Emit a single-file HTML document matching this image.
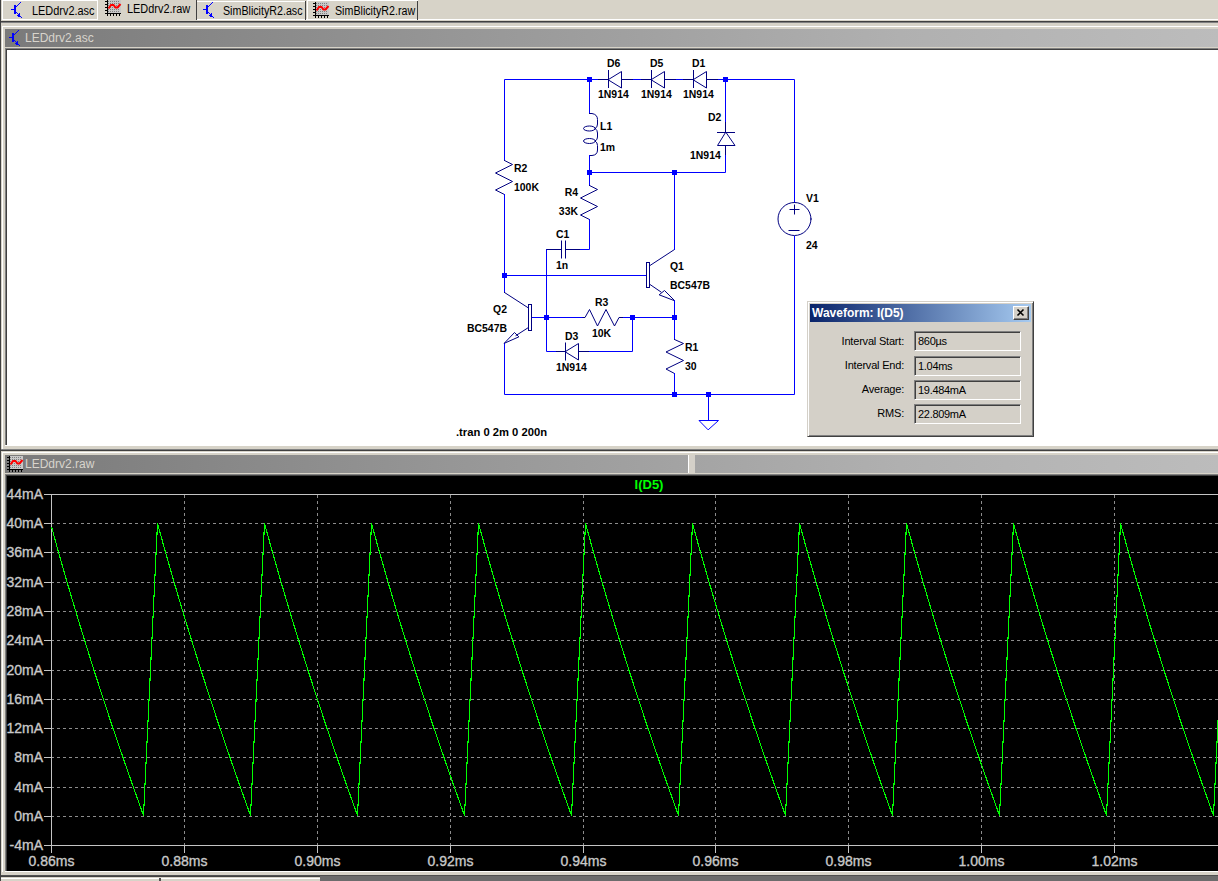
<!DOCTYPE html>
<html><head><meta charset="utf-8"><style>
html,body{margin:0;padding:0;}
body{width:1218px;height:881px;overflow:hidden;position:relative;background:#d7d3c8;font-family:"Liberation Sans", sans-serif;}
.a{position:absolute;}
.tab{position:absolute;font-size:12px;color:#000;white-space:nowrap;transform:scaleX(0.91);transform-origin:0 0;}
.lbl{position:absolute;font-size:11px;color:#000;text-align:right;width:100px;letter-spacing:-0.2px;}
.fld{position:absolute;left:914px;width:102px;height:18px;letter-spacing:-0.3px;border-top:1px solid #808080;border-left:1px solid #808080;border-right:1px solid #fff;border-bottom:1px solid #fff;box-shadow:inset 1px 1px 0 #404040;font-size:11px;line-height:18px;padding-left:3px;box-sizing:content-box;}
</style></head><body>
<!-- left edge -->
<div class="a" style="left:0;top:0;width:1px;height:881px;background:#404040"></div>
<!-- tab bar -->
<div class="a" style="left:2px;top:0;width:94px;height:18px;border:1px solid #fff;"></div>
<div class="a" style="left:196px;top:0;width:1px;height:20px;background:#404040"></div>
<div class="a" style="left:197px;top:1px;width:109px;height:1px;background:#fff"></div>
<div class="a" style="left:197px;top:19px;width:1021px;height:1px;background:#fff"></div>
<div class="a" style="left:305px;top:1px;width:1px;height:19px;background:#404040"></div>
<div class="a" style="left:307px;top:0px;width:110px;height:19px;border-left:1px solid #fff;border-top:1px solid #fff;"></div>
<div class="a" style="left:417px;top:1px;width:1px;height:19px;background:#404040"></div>
<svg width="13" height="19" style="position:absolute;left:10px;top:0px" shape-rendering="crispEdges"><rect x="4" y="5" width="2" height="9" fill="#0000ff"/><rect x="1" y="9" width="3" height="1" fill="#0000ff"/><rect x="1" y="10" width="1" height="0" fill="#0000ff"/><rect x="6" y="6" width="1" height="1" fill="#0000ff"/><rect x="7" y="5" width="1" height="1" fill="#0000ff"/><rect x="8" y="4" width="1" height="1" fill="#0000ff"/><rect x="9" y="3" width="1" height="1" fill="#0000ff"/><rect x="10" y="2" width="1" height="1" fill="#0000ff"/><rect x="6" y="12" width="1" height="1" fill="#0000ff"/><rect x="7" y="13" width="1" height="1" fill="#0000ff"/><rect x="8" y="14" width="1" height="1" fill="#0000ff"/><rect x="9" y="15" width="1" height="1" fill="#0000ff"/><rect x="10" y="16" width="1" height="1" fill="#0000ff"/><rect x="11" y="17" width="1" height="1" fill="#0000ff"/><rect x="8" y="15" width="2" height="2" fill="#0000ff"/><rect x="9" y="13" width="1" height="3" fill="#0000ff"/><rect x="7" y="15" width="1" height="1" fill="#0000ff"/><rect x="10" y="16" width="1" height="1" fill="#0000ff"/></svg>
<div class="tab" style="left:32px;top:4px;">LEDdrv2.asc</div>
<svg width="22" height="17" style="position:absolute;left:100px;top:0px" shape-rendering="crispEdges"><rect x="8" y="0" width="13" height="13" fill="#c8c8c8"/><rect x="8" y="1" width="1" height="1" fill="#808080"/><rect x="8" y="3" width="1" height="1" fill="#808080"/><rect x="8" y="5" width="1" height="1" fill="#808080"/><rect x="8" y="7" width="1" height="1" fill="#808080"/><rect x="8" y="9" width="1" height="1" fill="#808080"/><rect x="8" y="11" width="1" height="1" fill="#808080"/><rect x="10" y="1" width="1" height="1" fill="#808080"/><rect x="10" y="3" width="1" height="1" fill="#808080"/><rect x="10" y="5" width="1" height="1" fill="#808080"/><rect x="10" y="7" width="1" height="1" fill="#808080"/><rect x="10" y="9" width="1" height="1" fill="#808080"/><rect x="10" y="11" width="1" height="1" fill="#808080"/><rect x="12" y="1" width="1" height="1" fill="#808080"/><rect x="12" y="3" width="1" height="1" fill="#808080"/><rect x="12" y="5" width="1" height="1" fill="#808080"/><rect x="12" y="7" width="1" height="1" fill="#808080"/><rect x="12" y="9" width="1" height="1" fill="#808080"/><rect x="12" y="11" width="1" height="1" fill="#808080"/><rect x="14" y="1" width="1" height="1" fill="#808080"/><rect x="14" y="3" width="1" height="1" fill="#808080"/><rect x="14" y="5" width="1" height="1" fill="#808080"/><rect x="14" y="7" width="1" height="1" fill="#808080"/><rect x="14" y="9" width="1" height="1" fill="#808080"/><rect x="14" y="11" width="1" height="1" fill="#808080"/><rect x="16" y="1" width="1" height="1" fill="#808080"/><rect x="16" y="3" width="1" height="1" fill="#808080"/><rect x="16" y="5" width="1" height="1" fill="#808080"/><rect x="16" y="7" width="1" height="1" fill="#808080"/><rect x="16" y="9" width="1" height="1" fill="#808080"/><rect x="16" y="11" width="1" height="1" fill="#808080"/><rect x="18" y="1" width="1" height="1" fill="#808080"/><rect x="18" y="3" width="1" height="1" fill="#808080"/><rect x="18" y="5" width="1" height="1" fill="#808080"/><rect x="18" y="7" width="1" height="1" fill="#808080"/><rect x="18" y="9" width="1" height="1" fill="#808080"/><rect x="18" y="11" width="1" height="1" fill="#808080"/><rect x="7" y="0" width="1" height="14" fill="#000"/><rect x="5" y="13" width="16" height="1" fill="#000"/><rect x="5" y="1" width="2" height="1" fill="#000"/><rect x="5" y="4" width="2" height="1" fill="#000"/><rect x="5" y="7" width="2" height="1" fill="#000"/><rect x="5" y="10" width="2" height="1" fill="#000"/><rect x="5" y="13" width="2" height="1" fill="#000"/><rect x="7" y="14" width="1" height="2" fill="#000"/><rect x="10" y="14" width="1" height="2" fill="#000"/><rect x="13" y="14" width="1" height="2" fill="#000"/><rect x="16" y="14" width="1" height="2" fill="#000"/><rect x="19" y="14" width="1" height="2" fill="#000"/><polyline points="8.5,8.5 11,5 13.5,5 15.5,7.5 17.5,7.5 20.5,4" stroke="#ff0000" stroke-width="2" fill="none" shape-rendering="auto"/></svg>
<div class="tab" style="left:127px;top:2px;">LEDdrv2.raw</div>
<svg width="13" height="19" style="position:absolute;left:202px;top:0px" shape-rendering="crispEdges"><rect x="4" y="5" width="2" height="9" fill="#0000ff"/><rect x="1" y="9" width="3" height="1" fill="#0000ff"/><rect x="1" y="10" width="1" height="0" fill="#0000ff"/><rect x="6" y="6" width="1" height="1" fill="#0000ff"/><rect x="7" y="5" width="1" height="1" fill="#0000ff"/><rect x="8" y="4" width="1" height="1" fill="#0000ff"/><rect x="9" y="3" width="1" height="1" fill="#0000ff"/><rect x="10" y="2" width="1" height="1" fill="#0000ff"/><rect x="6" y="12" width="1" height="1" fill="#0000ff"/><rect x="7" y="13" width="1" height="1" fill="#0000ff"/><rect x="8" y="14" width="1" height="1" fill="#0000ff"/><rect x="9" y="15" width="1" height="1" fill="#0000ff"/><rect x="10" y="16" width="1" height="1" fill="#0000ff"/><rect x="11" y="17" width="1" height="1" fill="#0000ff"/><rect x="8" y="15" width="2" height="2" fill="#0000ff"/><rect x="9" y="13" width="1" height="3" fill="#0000ff"/><rect x="7" y="15" width="1" height="1" fill="#0000ff"/><rect x="10" y="16" width="1" height="1" fill="#0000ff"/></svg>
<div class="tab" style="left:223px;top:4px;transform:scaleX(0.89);">SimBlicityR2.asc</div>
<svg width="22" height="17" style="position:absolute;left:308px;top:2px" shape-rendering="crispEdges"><rect x="8" y="0" width="13" height="13" fill="#c8c8c8"/><rect x="8" y="1" width="1" height="1" fill="#808080"/><rect x="8" y="3" width="1" height="1" fill="#808080"/><rect x="8" y="5" width="1" height="1" fill="#808080"/><rect x="8" y="7" width="1" height="1" fill="#808080"/><rect x="8" y="9" width="1" height="1" fill="#808080"/><rect x="8" y="11" width="1" height="1" fill="#808080"/><rect x="10" y="1" width="1" height="1" fill="#808080"/><rect x="10" y="3" width="1" height="1" fill="#808080"/><rect x="10" y="5" width="1" height="1" fill="#808080"/><rect x="10" y="7" width="1" height="1" fill="#808080"/><rect x="10" y="9" width="1" height="1" fill="#808080"/><rect x="10" y="11" width="1" height="1" fill="#808080"/><rect x="12" y="1" width="1" height="1" fill="#808080"/><rect x="12" y="3" width="1" height="1" fill="#808080"/><rect x="12" y="5" width="1" height="1" fill="#808080"/><rect x="12" y="7" width="1" height="1" fill="#808080"/><rect x="12" y="9" width="1" height="1" fill="#808080"/><rect x="12" y="11" width="1" height="1" fill="#808080"/><rect x="14" y="1" width="1" height="1" fill="#808080"/><rect x="14" y="3" width="1" height="1" fill="#808080"/><rect x="14" y="5" width="1" height="1" fill="#808080"/><rect x="14" y="7" width="1" height="1" fill="#808080"/><rect x="14" y="9" width="1" height="1" fill="#808080"/><rect x="14" y="11" width="1" height="1" fill="#808080"/><rect x="16" y="1" width="1" height="1" fill="#808080"/><rect x="16" y="3" width="1" height="1" fill="#808080"/><rect x="16" y="5" width="1" height="1" fill="#808080"/><rect x="16" y="7" width="1" height="1" fill="#808080"/><rect x="16" y="9" width="1" height="1" fill="#808080"/><rect x="16" y="11" width="1" height="1" fill="#808080"/><rect x="18" y="1" width="1" height="1" fill="#808080"/><rect x="18" y="3" width="1" height="1" fill="#808080"/><rect x="18" y="5" width="1" height="1" fill="#808080"/><rect x="18" y="7" width="1" height="1" fill="#808080"/><rect x="18" y="9" width="1" height="1" fill="#808080"/><rect x="18" y="11" width="1" height="1" fill="#808080"/><rect x="7" y="0" width="1" height="14" fill="#000"/><rect x="5" y="13" width="16" height="1" fill="#000"/><rect x="5" y="1" width="2" height="1" fill="#000"/><rect x="5" y="4" width="2" height="1" fill="#000"/><rect x="5" y="7" width="2" height="1" fill="#000"/><rect x="5" y="10" width="2" height="1" fill="#000"/><rect x="5" y="13" width="2" height="1" fill="#000"/><rect x="7" y="14" width="1" height="2" fill="#000"/><rect x="10" y="14" width="1" height="2" fill="#000"/><rect x="13" y="14" width="1" height="2" fill="#000"/><rect x="16" y="14" width="1" height="2" fill="#000"/><rect x="19" y="14" width="1" height="2" fill="#000"/><polyline points="8.5,8.5 11,5 13.5,5 15.5,7.5 17.5,7.5 20.5,4" stroke="#ff0000" stroke-width="2" fill="none" shape-rendering="auto"/></svg>
<div class="tab" style="left:335px;top:4px;transform:scaleX(0.89);">SimBlicityR2.raw</div>
<div class="a" style="left:1px;top:21px;width:1217px;height:1px;background:#404040"></div>
<div class="a" style="left:1px;top:22px;width:1217px;height:1px;background:#808080"></div>
<!-- schematic window frame -->
<div class="a" style="left:2px;top:26px;width:1216px;height:1px;background:#fff"></div>
<div class="a" style="left:2px;top:26px;width:1px;height:424px;background:#fff"></div>
<div class="a" style="left:5px;top:29px;width:1213px;height:18px;background:linear-gradient(to right,#7a7a7a 0%,#808080 7.8%,#969696 36.7%,#b0b0b0 73.8%,#bcbcbc 100%)"></div>
<svg width="13" height="19" style="position:absolute;left:8px;top:28px" shape-rendering="crispEdges"><rect x="4" y="5" width="2" height="9" fill="#0000ff"/><rect x="1" y="9" width="3" height="1" fill="#0000ff"/><rect x="1" y="10" width="1" height="0" fill="#0000ff"/><rect x="6" y="6" width="1" height="1" fill="#0000ff"/><rect x="7" y="5" width="1" height="1" fill="#0000ff"/><rect x="8" y="4" width="1" height="1" fill="#0000ff"/><rect x="9" y="3" width="1" height="1" fill="#0000ff"/><rect x="10" y="2" width="1" height="1" fill="#0000ff"/><rect x="6" y="12" width="1" height="1" fill="#0000ff"/><rect x="7" y="13" width="1" height="1" fill="#0000ff"/><rect x="8" y="14" width="1" height="1" fill="#0000ff"/><rect x="9" y="15" width="1" height="1" fill="#0000ff"/><rect x="10" y="16" width="1" height="1" fill="#0000ff"/><rect x="11" y="17" width="1" height="1" fill="#0000ff"/><rect x="8" y="15" width="2" height="2" fill="#0000ff"/><rect x="9" y="13" width="1" height="3" fill="#0000ff"/><rect x="7" y="15" width="1" height="1" fill="#0000ff"/><rect x="10" y="16" width="1" height="1" fill="#0000ff"/></svg>
<div class="tab" style="left:25px;top:31px;color:#d8d4cc;transform:none;">LEDdrv2.asc</div>
<div class="a" style="left:5px;top:48px;width:1213px;height:1px;background:#808080"></div>
<div class="a" style="left:6px;top:49px;width:1212px;height:1px;background:#404040"></div>
<div class="a" style="left:5px;top:48px;width:1px;height:398px;background:#808080"></div>
<div class="a" style="left:6px;top:49px;width:1px;height:396px;background:#404040"></div>
<div class="a" style="left:7px;top:50px;width:1211px;height:395px;background:#fff"></div>
<div class="a" style="left:5px;top:445px;width:1213px;height:1px;background:#fff"></div>
<div class="a" style="left:1px;top:449px;width:1217px;height:1px;background:#808080"></div>
<div class="a" style="left:1px;top:450px;width:1217px;height:1px;background:#404040"></div>
<svg width="1218" height="881" style="position:absolute;left:0;top:0"><g fill="none" stroke-width="1" stroke-linecap="square"><polyline points="504.5,160.5 504.5,79.5 597.5,79.5" stroke="#0000ff"/><polyline points="632.5,79.5 641.5,79.5" stroke="#0000ff"/><polyline points="675.5,79.5 684.5,79.5" stroke="#0000ff"/><polyline points="717.5,79.5 794.5,79.5 794.5,202.5" stroke="#0000ff"/><polyline points="598.5,79.5 632.5,79.5" stroke="#000080"/><polyline points="608.5,70.5 608.5,87.5" stroke="#000080"/><polygon points="608.5,79.5 621.5,71.5 621.5,87.5" stroke="#000080" fill="#fff"/><polyline points="641.5,79.5 675.5,79.5" stroke="#000080"/><polyline points="651.5,70.5 651.5,87.5" stroke="#000080"/><polygon points="651.5,79.5 664.5,71.5 664.5,87.5" stroke="#000080" fill="#fff"/><polyline points="683.5,79.5 717.5,79.5" stroke="#000080"/><polyline points="693.5,70.5 693.5,87.5" stroke="#000080"/><polygon points="693.5,79.5 706.5,71.5 706.5,87.5" stroke="#000080" fill="#fff"/><rect x="587" y="77" width="5" height="5" fill="#0000ff" stroke="none"/><rect x="723" y="77" width="5" height="5" fill="#0000ff" stroke="none"/><text transform="translate(607,67) scale(0.95,1)" text-anchor="start" font-family='"Liberation Sans", sans-serif' font-weight="bold" font-size="11" fill="#000" stroke="none">D6</text><text transform="translate(598,98) scale(0.95,1)" text-anchor="start" font-family='"Liberation Sans", sans-serif' font-weight="bold" font-size="11" fill="#000" stroke="none">1N914</text><text transform="translate(650,67) scale(0.95,1)" text-anchor="start" font-family='"Liberation Sans", sans-serif' font-weight="bold" font-size="11" fill="#000" stroke="none">D5</text><text transform="translate(641,98) scale(0.95,1)" text-anchor="start" font-family='"Liberation Sans", sans-serif' font-weight="bold" font-size="11" fill="#000" stroke="none">1N914</text><text transform="translate(692,67) scale(0.95,1)" text-anchor="start" font-family='"Liberation Sans", sans-serif' font-weight="bold" font-size="11" fill="#000" stroke="none">D1</text><text transform="translate(683,98) scale(0.95,1)" text-anchor="start" font-family='"Liberation Sans", sans-serif' font-weight="bold" font-size="11" fill="#000" stroke="none">1N914</text><polyline points="725.5,79.5 725.5,122.5" stroke="#0000ff"/><polyline points="725.5,122.5 725.5,155.5" stroke="#000080"/><polyline points="717.5,132.5 734.5,132.5" stroke="#000080"/><polygon points="725.5,132.5 717.5,145.5 734.5,145.5" stroke="#000080" fill="#fff"/><polyline points="725.5,155.5 725.5,172.5 589.5,172.5" stroke="#0000ff"/><text transform="translate(708,121) scale(0.95,1)" text-anchor="start" font-family='"Liberation Sans", sans-serif' font-weight="bold" font-size="11" fill="#000" stroke="none">D2</text><text transform="translate(690,159) scale(0.95,1)" text-anchor="start" font-family='"Liberation Sans", sans-serif' font-weight="bold" font-size="11" fill="#000" stroke="none">1N914</text><polyline points="589.5,79.5 589.5,113.5" stroke="#0000ff"/><path d="M589.5,113.5 L592,113.5 Q597.5,114.5 597.5,119.5 L597.5,124 Q597.5,127.5 595,128.5 Q597.5,130 597.5,133 L597.5,137 Q597.5,140 595,141 Q597.5,142.5 597.5,145.5 L597.5,150 Q597.5,155 592,155.5 L589.5,155.5" stroke="#000080"/><ellipse cx="589.5" cy="128.5" rx="6" ry="2.5" stroke="#000080"/><ellipse cx="589.5" cy="141" rx="6" ry="2.5" stroke="#000080"/><polyline points="589.5,155.5 589.5,185.5" stroke="#0000ff"/><rect x="587" y="170" width="5" height="5" fill="#0000ff" stroke="none"/><text transform="translate(600,130) scale(0.95,1)" text-anchor="start" font-family='"Liberation Sans", sans-serif' font-weight="bold" font-size="11" fill="#000" stroke="none">L1</text><text transform="translate(600,151) scale(0.95,1)" text-anchor="start" font-family='"Liberation Sans", sans-serif' font-weight="bold" font-size="11" fill="#000" stroke="none">1m</text><polyline points="504.5,160.5 512.5,164.5 495.5,173 512.5,181.5 495.5,190 504.5,194.5" stroke="#000080"/><polyline points="504.5,194.5 504.5,292.5" stroke="#0000ff"/><polyline points="504.5,343.5 504.5,394.5 794.5,394.5 794.5,236.5" stroke="#0000ff"/><rect x="502" y="273" width="5" height="5" fill="#0000ff" stroke="none"/><text transform="translate(514,172) scale(0.95,1)" text-anchor="start" font-family='"Liberation Sans", sans-serif' font-weight="bold" font-size="11" fill="#000" stroke="none">R2</text><text transform="translate(514,191) scale(0.95,1)" text-anchor="start" font-family='"Liberation Sans", sans-serif' font-weight="bold" font-size="11" fill="#000" stroke="none">100K</text><polyline points="589.5,185.5 597.5,189.5 580.5,198 597.5,206.5 580.5,215 589.5,219.5" stroke="#000080"/><polyline points="589.5,219.5 589.5,249.5 579.5,249.5" stroke="#0000ff"/><text transform="translate(578,196) scale(0.95,1)" text-anchor="end" font-family='"Liberation Sans", sans-serif' font-weight="bold" font-size="11" fill="#000" stroke="none">R4</text><text transform="translate(578,215) scale(0.95,1)" text-anchor="end" font-family='"Liberation Sans", sans-serif' font-weight="bold" font-size="11" fill="#000" stroke="none">33K</text><polyline points="579.5,249.5 565.5,249.5" stroke="#000080"/><polyline points="565.5,241 565.5,258" stroke="#000080"/><polyline points="561.5,241 561.5,258" stroke="#000080"/><polyline points="546.5,249.5 546.5,351.5 556.5,351.5" stroke="#0000ff"/><polyline points="561.5,249.5 547,249.5" stroke="#000080"/><text transform="translate(556,238) scale(0.95,1)" text-anchor="start" font-family='"Liberation Sans", sans-serif' font-weight="bold" font-size="11" fill="#000" stroke="none">C1</text><text transform="translate(556,269) scale(0.95,1)" text-anchor="start" font-family='"Liberation Sans", sans-serif' font-weight="bold" font-size="11" fill="#000" stroke="none">1n</text><polyline points="504.5,275.5 646.5,275.5" stroke="#0000ff"/><rect x="646.5" y="262.5" width="3" height="25" stroke="#000080" fill="#fff"/><polyline points="650,265.5 674.5,249.5" stroke="#000080"/><polyline points="650,284.5 661,292" stroke="#000080"/><polygon points="674.5,300.5 664.5,290.5 659.5,294.5" stroke="#000080" fill="none"/><polyline points="674.5,172.5 674.5,249.5" stroke="#0000ff"/><rect x="672" y="170" width="5" height="5" fill="#0000ff" stroke="none"/><polyline points="674.5,300.5 674.5,339.5" stroke="#0000ff"/><rect x="672" y="315" width="5" height="5" fill="#0000ff" stroke="none"/><text transform="translate(670,270) scale(0.95,1)" text-anchor="start" font-family='"Liberation Sans", sans-serif' font-weight="bold" font-size="11" fill="#000" stroke="none">Q1</text><text transform="translate(670,289) scale(0.95,1)" text-anchor="start" font-family='"Liberation Sans", sans-serif' font-weight="bold" font-size="11" fill="#000" stroke="none">BC547B</text><polyline points="504.5,275.5 504.5,292.5" stroke="#0000ff"/><rect x="528.5" y="304.5" width="3" height="26" stroke="#000080" fill="#fff"/><polyline points="504.5,292.5 528.5,308" stroke="#000080"/><polyline points="528.5,327.5 516,335.5" stroke="#000080"/><polygon points="504.5,343 514.5,332.5 518.5,336.5" stroke="#000080" fill="none"/><polyline points="532.5,317.5 583.5,317.5" stroke="#0000ff"/><rect x="544" y="315" width="5" height="5" fill="#0000ff" stroke="none"/><text transform="translate(507,313) scale(0.95,1)" text-anchor="end" font-family='"Liberation Sans", sans-serif' font-weight="bold" font-size="11" fill="#000" stroke="none">Q2</text><text transform="translate(507,332) scale(0.95,1)" text-anchor="end" font-family='"Liberation Sans", sans-serif' font-weight="bold" font-size="11" fill="#000" stroke="none">BC547B</text><polyline points="583,317.5 585,317.5 589.5,309.5 597.5,326 606,309.5 614.5,326 619,317.5 623,317.5" stroke="#000080"/><polyline points="623.5,317.5 674.5,317.5" stroke="#0000ff"/><rect x="630" y="315" width="5" height="5" fill="#0000ff" stroke="none"/><polyline points="632.5,317.5 632.5,351.5 588.5,351.5" stroke="#0000ff"/><text transform="translate(595,306) scale(0.95,1)" text-anchor="start" font-family='"Liberation Sans", sans-serif' font-weight="bold" font-size="11" fill="#000" stroke="none">R3</text><text transform="translate(592,337) scale(0.95,1)" text-anchor="start" font-family='"Liberation Sans", sans-serif' font-weight="bold" font-size="11" fill="#000" stroke="none">10K</text><polyline points="556.5,351.5 588.5,351.5" stroke="#000080"/><polyline points="565.5,343 565.5,360" stroke="#000080"/><polygon points="565.5,351.5 578.5,343.5 578.5,359.5" stroke="#000080" fill="#fff"/><text transform="translate(565,340) scale(0.95,1)" text-anchor="start" font-family='"Liberation Sans", sans-serif' font-weight="bold" font-size="11" fill="#000" stroke="none">D3</text><text transform="translate(556,371) scale(0.95,1)" text-anchor="start" font-family='"Liberation Sans", sans-serif' font-weight="bold" font-size="11" fill="#000" stroke="none">1N914</text><polyline points="674.5,339.5 683.5,343.5 666,352 683.5,360.5 666,369 674.5,373.5" stroke="#000080"/><polyline points="674.5,373.5 674.5,394.5" stroke="#0000ff"/><rect x="672" y="392" width="5" height="5" fill="#0000ff" stroke="none"/><rect x="706" y="392" width="5" height="5" fill="#0000ff" stroke="none"/><text transform="translate(685,351) scale(0.95,1)" text-anchor="start" font-family='"Liberation Sans", sans-serif' font-weight="bold" font-size="11" fill="#000" stroke="none">R1</text><text transform="translate(685,370) scale(0.95,1)" text-anchor="start" font-family='"Liberation Sans", sans-serif' font-weight="bold" font-size="11" fill="#000" stroke="none">30</text><polyline points="708.5,394.5 708.5,420.5" stroke="#0000ff"/><polygon points="699.5,420.5 718.5,420.5 708.5,429.5" stroke="#0000ff" fill="#fff"/><circle cx="794.5" cy="219" r="16.5" stroke="#000080"/><polyline points="790,209.5 799,209.5" stroke="#000080"/><polyline points="794.5,205 794.5,214" stroke="#000080"/><polyline points="789,230.5 799,230.5" stroke="#000080"/><text transform="translate(806,202) scale(0.95,1)" text-anchor="start" font-family='"Liberation Sans", sans-serif' font-weight="bold" font-size="11" fill="#000" stroke="none">V1</text><text transform="translate(806,249) scale(0.95,1)" text-anchor="start" font-family='"Liberation Sans", sans-serif' font-weight="bold" font-size="11" fill="#000" stroke="none">24</text><text transform="translate(456,436) scale(1.02,1)" text-anchor="start" font-family='"Liberation Sans", sans-serif' font-weight="bold" font-size="11" fill="#000" stroke="none">.tran 0 2m 0 200n</text></g></svg>
<!-- raw window -->
<div class="a" style="left:2px;top:452px;width:1216px;height:1px;background:#fff"></div>
<div class="a" style="left:2px;top:452px;width:1px;height:420px;background:#fff"></div>
<div class="a" style="left:5px;top:455px;width:1213px;height:18px;background:linear-gradient(to right,#7a7a7a 0%,#808080 7.8%,#969696 36.7%,#b0b0b0 73.8%,#bcbcbc 100%)"></div>
<div class="a" style="left:688px;top:455px;width:1px;height:18px;background:#fff"></div>
<div class="a" style="left:689px;top:455px;width:6px;height:18px;background:#d4d0c8"></div>
<svg width="22" height="17" style="position:absolute;left:2px;top:456px" shape-rendering="crispEdges"><rect x="8" y="0" width="13" height="13" fill="#c8c8c8"/><rect x="8" y="1" width="1" height="1" fill="#808080"/><rect x="8" y="3" width="1" height="1" fill="#808080"/><rect x="8" y="5" width="1" height="1" fill="#808080"/><rect x="8" y="7" width="1" height="1" fill="#808080"/><rect x="8" y="9" width="1" height="1" fill="#808080"/><rect x="8" y="11" width="1" height="1" fill="#808080"/><rect x="10" y="1" width="1" height="1" fill="#808080"/><rect x="10" y="3" width="1" height="1" fill="#808080"/><rect x="10" y="5" width="1" height="1" fill="#808080"/><rect x="10" y="7" width="1" height="1" fill="#808080"/><rect x="10" y="9" width="1" height="1" fill="#808080"/><rect x="10" y="11" width="1" height="1" fill="#808080"/><rect x="12" y="1" width="1" height="1" fill="#808080"/><rect x="12" y="3" width="1" height="1" fill="#808080"/><rect x="12" y="5" width="1" height="1" fill="#808080"/><rect x="12" y="7" width="1" height="1" fill="#808080"/><rect x="12" y="9" width="1" height="1" fill="#808080"/><rect x="12" y="11" width="1" height="1" fill="#808080"/><rect x="14" y="1" width="1" height="1" fill="#808080"/><rect x="14" y="3" width="1" height="1" fill="#808080"/><rect x="14" y="5" width="1" height="1" fill="#808080"/><rect x="14" y="7" width="1" height="1" fill="#808080"/><rect x="14" y="9" width="1" height="1" fill="#808080"/><rect x="14" y="11" width="1" height="1" fill="#808080"/><rect x="16" y="1" width="1" height="1" fill="#808080"/><rect x="16" y="3" width="1" height="1" fill="#808080"/><rect x="16" y="5" width="1" height="1" fill="#808080"/><rect x="16" y="7" width="1" height="1" fill="#808080"/><rect x="16" y="9" width="1" height="1" fill="#808080"/><rect x="16" y="11" width="1" height="1" fill="#808080"/><rect x="18" y="1" width="1" height="1" fill="#808080"/><rect x="18" y="3" width="1" height="1" fill="#808080"/><rect x="18" y="5" width="1" height="1" fill="#808080"/><rect x="18" y="7" width="1" height="1" fill="#808080"/><rect x="18" y="9" width="1" height="1" fill="#808080"/><rect x="18" y="11" width="1" height="1" fill="#808080"/><rect x="7" y="0" width="1" height="14" fill="#000"/><rect x="5" y="13" width="16" height="1" fill="#000"/><rect x="5" y="1" width="2" height="1" fill="#000"/><rect x="5" y="4" width="2" height="1" fill="#000"/><rect x="5" y="7" width="2" height="1" fill="#000"/><rect x="5" y="10" width="2" height="1" fill="#000"/><rect x="5" y="13" width="2" height="1" fill="#000"/><rect x="7" y="14" width="1" height="2" fill="#000"/><rect x="10" y="14" width="1" height="2" fill="#000"/><rect x="13" y="14" width="1" height="2" fill="#000"/><rect x="16" y="14" width="1" height="2" fill="#000"/><rect x="19" y="14" width="1" height="2" fill="#000"/><polyline points="8.5,8.5 11,5 13.5,5 15.5,7.5 17.5,7.5 20.5,4" stroke="#ff0000" stroke-width="2" fill="none" shape-rendering="auto"/></svg>
<div class="tab" style="left:25px;top:457px;color:#d8d4cc;transform:none;">LEDdrv2.raw</div>
<div class="a" style="left:5px;top:474px;width:1213px;height:1px;background:#808080"></div>
<div class="a" style="left:6px;top:475px;width:1212px;height:1px;background:#404040"></div>
<div class="a" style="left:5px;top:474px;width:1px;height:398px;background:#808080"></div>
<div class="a" style="left:6px;top:475px;width:1px;height:396px;background:#404040"></div>
<div class="a" style="left:7px;top:476px;width:1211px;height:395px;background:#000"></div>
<div class="a" style="left:5px;top:871px;width:1213px;height:1px;background:#fff"></div>
<div class="a" style="left:1px;top:875px;width:1217px;height:1px;background:#505050"></div>
<div class="a" style="left:1px;top:876px;width:1217px;height:1px;background:#404040"></div>
<div class="a" style="left:1px;top:878px;width:319px;height:1px;background:#fff"></div>
<div class="a" style="left:159px;top:878px;width:2px;height:3px;background:#505050"></div>
<div class="a" style="left:320px;top:876px;width:898px;height:5px;background:#6c6c6c"></div>
<svg width="1218" height="881" style="position:absolute;left:0;top:0"><defs><clipPath id="pc"><rect x="7" y="476" width="1211" height="395"/></clipPath></defs><g clip-path="url(#pc)" shape-rendering="crispEdges"><line x1="51" y1="523.5" x2="1218" y2="523.5" stroke="#8c8c8c" stroke-width="1" stroke-dasharray="3,3"/><line x1="44" y1="523.5" x2="51" y2="523.5" stroke="#c4c4c4" stroke-width="1"/><line x1="51" y1="552.5" x2="1218" y2="552.5" stroke="#8c8c8c" stroke-width="1" stroke-dasharray="3,3"/><line x1="44" y1="552.5" x2="51" y2="552.5" stroke="#c4c4c4" stroke-width="1"/><line x1="51" y1="582.5" x2="1218" y2="582.5" stroke="#8c8c8c" stroke-width="1" stroke-dasharray="3,3"/><line x1="44" y1="582.5" x2="51" y2="582.5" stroke="#c4c4c4" stroke-width="1"/><line x1="51" y1="611.5" x2="1218" y2="611.5" stroke="#8c8c8c" stroke-width="1" stroke-dasharray="3,3"/><line x1="44" y1="611.5" x2="51" y2="611.5" stroke="#c4c4c4" stroke-width="1"/><line x1="51" y1="640.5" x2="1218" y2="640.5" stroke="#8c8c8c" stroke-width="1" stroke-dasharray="3,3"/><line x1="44" y1="640.5" x2="51" y2="640.5" stroke="#c4c4c4" stroke-width="1"/><line x1="51" y1="670.5" x2="1218" y2="670.5" stroke="#8c8c8c" stroke-width="1" stroke-dasharray="3,3"/><line x1="44" y1="670.5" x2="51" y2="670.5" stroke="#c4c4c4" stroke-width="1"/><line x1="51" y1="699.5" x2="1218" y2="699.5" stroke="#8c8c8c" stroke-width="1" stroke-dasharray="3,3"/><line x1="44" y1="699.5" x2="51" y2="699.5" stroke="#c4c4c4" stroke-width="1"/><line x1="51" y1="728.5" x2="1218" y2="728.5" stroke="#8c8c8c" stroke-width="1" stroke-dasharray="3,3"/><line x1="44" y1="728.5" x2="51" y2="728.5" stroke="#c4c4c4" stroke-width="1"/><line x1="51" y1="757.5" x2="1218" y2="757.5" stroke="#8c8c8c" stroke-width="1" stroke-dasharray="3,3"/><line x1="44" y1="757.5" x2="51" y2="757.5" stroke="#c4c4c4" stroke-width="1"/><line x1="51" y1="787.5" x2="1218" y2="787.5" stroke="#8c8c8c" stroke-width="1" stroke-dasharray="3,3"/><line x1="44" y1="787.5" x2="51" y2="787.5" stroke="#c4c4c4" stroke-width="1"/><line x1="51" y1="816.5" x2="1218" y2="816.5" stroke="#8c8c8c" stroke-width="1" stroke-dasharray="3,3"/><line x1="44" y1="816.5" x2="51" y2="816.5" stroke="#c4c4c4" stroke-width="1"/><line x1="184.5" y1="495" x2="184.5" y2="845" stroke="#8c8c8c" stroke-width="1" stroke-dasharray="3,3"/><line x1="317.5" y1="495" x2="317.5" y2="845" stroke="#8c8c8c" stroke-width="1" stroke-dasharray="3,3"/><line x1="450.5" y1="495" x2="450.5" y2="845" stroke="#8c8c8c" stroke-width="1" stroke-dasharray="3,3"/><line x1="583.5" y1="495" x2="583.5" y2="845" stroke="#8c8c8c" stroke-width="1" stroke-dasharray="3,3"/><line x1="715.5" y1="495" x2="715.5" y2="845" stroke="#8c8c8c" stroke-width="1" stroke-dasharray="3,3"/><line x1="848.5" y1="495" x2="848.5" y2="845" stroke="#8c8c8c" stroke-width="1" stroke-dasharray="3,3"/><line x1="981.5" y1="495" x2="981.5" y2="845" stroke="#8c8c8c" stroke-width="1" stroke-dasharray="3,3"/><line x1="1114.5" y1="495" x2="1114.5" y2="845" stroke="#8c8c8c" stroke-width="1" stroke-dasharray="3,3"/><line x1="51.5" y1="846" x2="51.5" y2="853" stroke="#c4c4c4" stroke-width="1"/><line x1="184.5" y1="846" x2="184.5" y2="853" stroke="#c4c4c4" stroke-width="1"/><line x1="317.5" y1="846" x2="317.5" y2="853" stroke="#c4c4c4" stroke-width="1"/><line x1="450.5" y1="846" x2="450.5" y2="853" stroke="#c4c4c4" stroke-width="1"/><line x1="583.5" y1="846" x2="583.5" y2="853" stroke="#c4c4c4" stroke-width="1"/><line x1="715.5" y1="846" x2="715.5" y2="853" stroke="#c4c4c4" stroke-width="1"/><line x1="848.5" y1="846" x2="848.5" y2="853" stroke="#c4c4c4" stroke-width="1"/><line x1="981.5" y1="846" x2="981.5" y2="853" stroke="#c4c4c4" stroke-width="1"/><line x1="1114.5" y1="846" x2="1114.5" y2="853" stroke="#c4c4c4" stroke-width="1"/><line x1="44" y1="494.5" x2="1218" y2="494.5" stroke="#c4c4c4" stroke-width="1"/><line x1="44" y1="845.5" x2="1218" y2="845.5" stroke="#c4c4c4" stroke-width="1"/><line x1="51.5" y1="494" x2="51.5" y2="853" stroke="#c4c4c4" stroke-width="1"/><path d="M51.50,526.64 L58.63,552.70 L67.02,581.90 L75.67,611.10 L84.58,640.30 L93.75,669.50 L103.18,698.70 L112.87,727.90 L122.82,757.10 L133.03,786.30 L143.50,815.50 L157.50,523.50 L165.63,552.70 L174.02,581.90 L182.67,611.10 L191.58,640.30 L200.75,669.50 L210.18,698.70 L219.87,727.90 L229.82,757.10 L240.03,786.30 L250.50,815.50 L264.50,523.50 L272.63,552.70 L281.02,581.90 L289.67,611.10 L298.58,640.30 L307.75,669.50 L317.18,698.70 L326.87,727.90 L336.82,757.10 L347.03,786.30 L357.50,815.50 L371.50,523.50 L379.63,552.70 L388.02,581.90 L396.67,611.10 L405.58,640.30 L414.75,669.50 L424.18,698.70 L433.87,727.90 L443.82,757.10 L454.03,786.30 L464.50,815.50 L478.50,523.50 L486.63,552.70 L495.02,581.90 L503.67,611.10 L512.58,640.30 L521.75,669.50 L531.18,698.70 L540.87,727.90 L550.82,757.10 L561.03,786.30 L571.50,815.50 L585.50,523.50 L593.63,552.70 L602.02,581.90 L610.67,611.10 L619.58,640.30 L628.75,669.50 L638.18,698.70 L647.87,727.90 L657.82,757.10 L668.03,786.30 L678.50,815.50 L692.50,523.50 L700.63,552.70 L709.02,581.90 L717.67,611.10 L726.58,640.30 L735.75,669.50 L745.18,698.70 L754.87,727.90 L764.82,757.10 L775.03,786.30 L785.50,815.50 L799.50,523.50 L807.63,552.70 L816.02,581.90 L824.67,611.10 L833.58,640.30 L842.75,669.50 L852.18,698.70 L861.87,727.90 L871.82,757.10 L882.03,786.30 L892.50,815.50 L906.50,523.50 L914.63,552.70 L923.02,581.90 L931.67,611.10 L940.58,640.30 L949.75,669.50 L959.18,698.70 L968.87,727.90 L978.82,757.10 L989.03,786.30 L999.50,815.50 L1013.50,523.50 L1021.63,552.70 L1030.02,581.90 L1038.67,611.10 L1047.58,640.30 L1056.74,669.50 L1066.18,698.70 L1075.87,727.90 L1085.82,757.10 L1096.03,786.30 L1106.50,815.50 L1120.50,523.50 L1128.63,552.70 L1137.02,581.90 L1145.67,611.10 L1154.58,640.30 L1163.74,669.50 L1173.18,698.70 L1182.87,727.90 L1192.82,757.10 L1203.03,786.30 L1213.50,815.50 L1227.50,523.50" fill="none" stroke="#00ff00" stroke-width="1.1"/></g><text x="43" y="499.0" text-anchor="end" font-family='"Liberation Sans", sans-serif' font-size="14" fill="#c8c8c8" stroke="#c8c8c8" stroke-width="0.35">44mA</text><text x="43" y="528.0" text-anchor="end" font-family='"Liberation Sans", sans-serif' font-size="14" fill="#c8c8c8" stroke="#c8c8c8" stroke-width="0.35">40mA</text><text x="43" y="557.0" text-anchor="end" font-family='"Liberation Sans", sans-serif' font-size="14" fill="#c8c8c8" stroke="#c8c8c8" stroke-width="0.35">36mA</text><text x="43" y="587.0" text-anchor="end" font-family='"Liberation Sans", sans-serif' font-size="14" fill="#c8c8c8" stroke="#c8c8c8" stroke-width="0.35">32mA</text><text x="43" y="616.0" text-anchor="end" font-family='"Liberation Sans", sans-serif' font-size="14" fill="#c8c8c8" stroke="#c8c8c8" stroke-width="0.35">28mA</text><text x="43" y="645.0" text-anchor="end" font-family='"Liberation Sans", sans-serif' font-size="14" fill="#c8c8c8" stroke="#c8c8c8" stroke-width="0.35">24mA</text><text x="43" y="675.0" text-anchor="end" font-family='"Liberation Sans", sans-serif' font-size="14" fill="#c8c8c8" stroke="#c8c8c8" stroke-width="0.35">20mA</text><text x="43" y="704.0" text-anchor="end" font-family='"Liberation Sans", sans-serif' font-size="14" fill="#c8c8c8" stroke="#c8c8c8" stroke-width="0.35">16mA</text><text x="43" y="733.0" text-anchor="end" font-family='"Liberation Sans", sans-serif' font-size="14" fill="#c8c8c8" stroke="#c8c8c8" stroke-width="0.35">12mA</text><text x="43" y="762.0" text-anchor="end" font-family='"Liberation Sans", sans-serif' font-size="14" fill="#c8c8c8" stroke="#c8c8c8" stroke-width="0.35">8mA</text><text x="43" y="792.0" text-anchor="end" font-family='"Liberation Sans", sans-serif' font-size="14" fill="#c8c8c8" stroke="#c8c8c8" stroke-width="0.35">4mA</text><text x="43" y="821.0" text-anchor="end" font-family='"Liberation Sans", sans-serif' font-size="14" fill="#c8c8c8" stroke="#c8c8c8" stroke-width="0.35">0mA</text><text x="43" y="850.0" text-anchor="end" font-family='"Liberation Sans", sans-serif' font-size="14" fill="#c8c8c8" stroke="#c8c8c8" stroke-width="0.35">-4mA</text><text x="51.5" y="866" text-anchor="middle" font-family='"Liberation Sans", sans-serif' font-size="14" fill="#c8c8c8" stroke="#c8c8c8" stroke-width="0.35">0.86ms</text><text x="184.5" y="866" text-anchor="middle" font-family='"Liberation Sans", sans-serif' font-size="14" fill="#c8c8c8" stroke="#c8c8c8" stroke-width="0.35">0.88ms</text><text x="317.5" y="866" text-anchor="middle" font-family='"Liberation Sans", sans-serif' font-size="14" fill="#c8c8c8" stroke="#c8c8c8" stroke-width="0.35">0.90ms</text><text x="450.5" y="866" text-anchor="middle" font-family='"Liberation Sans", sans-serif' font-size="14" fill="#c8c8c8" stroke="#c8c8c8" stroke-width="0.35">0.92ms</text><text x="583.5" y="866" text-anchor="middle" font-family='"Liberation Sans", sans-serif' font-size="14" fill="#c8c8c8" stroke="#c8c8c8" stroke-width="0.35">0.94ms</text><text x="715.5" y="866" text-anchor="middle" font-family='"Liberation Sans", sans-serif' font-size="14" fill="#c8c8c8" stroke="#c8c8c8" stroke-width="0.35">0.96ms</text><text x="848.5" y="866" text-anchor="middle" font-family='"Liberation Sans", sans-serif' font-size="14" fill="#c8c8c8" stroke="#c8c8c8" stroke-width="0.35">0.98ms</text><text x="981.5" y="866" text-anchor="middle" font-family='"Liberation Sans", sans-serif' font-size="14" fill="#c8c8c8" stroke="#c8c8c8" stroke-width="0.35">1.00ms</text><text x="1114.5" y="866" text-anchor="middle" font-family='"Liberation Sans", sans-serif' font-size="14" fill="#c8c8c8" stroke="#c8c8c8" stroke-width="0.35">1.02ms</text><text x="649" y="489" text-anchor="middle" font-family='"Liberation Sans", sans-serif' font-size="13" font-weight="bold" fill="#00ff00">I(D5)</text></svg>
<!-- dialog -->
<div class="a" style="left:807px;top:301px;width:225px;height:134px;background:#d4d0c8;border-top:1px solid #d4d0c8;border-left:1px solid #d4d0c8;border-right:1px solid #404040;border-bottom:1px solid #404040;box-shadow:inset 1px 1px 0 #fff, inset -1px -1px 0 #808080;"></div>
<div class="a" style="left:810px;top:304px;width:221px;height:18px;background:linear-gradient(to right,#0a246a,#a6caf0)"></div>
<div class="a" style="left:812px;top:306px;font-size:12px;font-weight:bold;color:#fff;white-space:nowrap">Waveform: I(D5)</div>
<div class="a" style="left:1013px;top:306px;width:14px;height:12px;background:#d4d0c8;border-top:1px solid #fff;border-left:1px solid #fff;border-right:1px solid #404040;border-bottom:1px solid #404040;box-shadow:inset -1px -1px 0 #808080;"></div>
<svg class="a" style="left:1016px;top:308px" width="10" height="9"><path d="M1.5,1.5 L7.5,7.5 M7.5,1.5 L1.5,7.5" stroke="#000" stroke-width="1.6"/></svg>
<div class="lbl" style="left:804px;top:335px;">Interval Start:</div>
<div class="lbl" style="left:804px;top:359px;">Interval End:</div>
<div class="lbl" style="left:804px;top:383px;">Average:</div>
<div class="lbl" style="left:804px;top:407px;">RMS:</div>
<div class="fld" style="top:331px;">860µs</div>
<div class="fld" style="top:356px;">1.04ms</div>
<div class="fld" style="top:380px;">19.484mA</div>
<div class="fld" style="top:404px;">22.809mA</div>
</body></html>
